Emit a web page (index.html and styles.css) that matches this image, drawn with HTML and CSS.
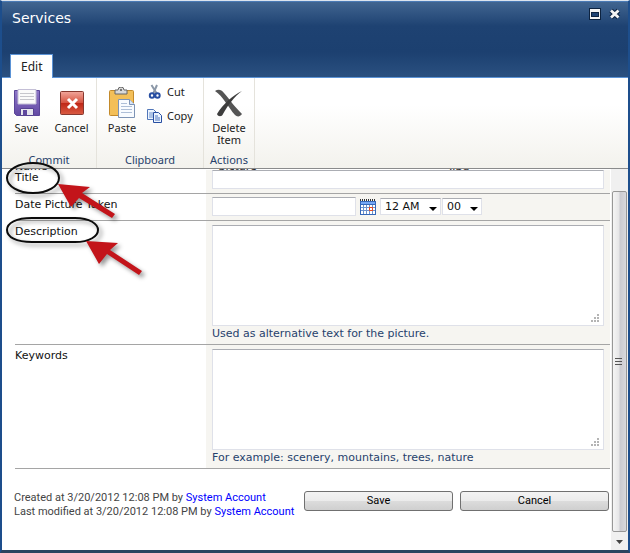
FILE: index.html
```html
<!DOCTYPE html>
<html lang="en">
<head>
<meta charset="utf-8">
<title>Services</title>
<link rel="stylesheet" href="styles.css">
</head>
<body>
<main class="dialog">
  <header class="titlebar">
    <div class="heading">
      <h1>Services</h1>
      <div class="window-buttons">
        <button type="button" aria-label="Maximize"><svg width="12" height="12" viewBox="0 0 12 12"><rect x=".5" y=".5" width="11" height="11" fill="#f4f4f4" stroke="#0d2340"/><rect x="2.5" y="4.5" width="7" height="4" fill="#1e4373" stroke="#0d2340"/></svg></button>
        <button type="button" aria-label="Close"><svg width="12" height="12" viewBox="0 0 12 12"><path d="M2 2.500l7.500 7m0-7l-7.500 7" stroke="#0d2340" stroke-width="5"/><path d="M2 2.500l7.500 7m0-7l-7.500 7" stroke="#f4f4f4" stroke-width="2.800"/></svg></button>
      </div>
    </div>
    <button type="button" class="tab">Edit</button>
  </header>

  <section class="ribbon" aria-label="Edit">
    <div class="group commit">
      <div class="tools">
        <button type="button" class="tool"><svg width="32" height="32" viewBox="0 0 32 32"><defs><linearGradient id="disk" x2="0" y2="1"><stop stop-color="#8f78c8"/><stop offset="1" stop-color="#6249a3"/></linearGradient></defs><path d="M3.500 3.500h25v25h-23l-2-2z" fill="url(#disk)" stroke="#5a4598"/><path d="M7 2.500h18V17H7z" fill="#fafafa" stroke="#c4bfd6"/><path d="M9 6.500h14M9 9.500h14M9 12.500h14" stroke="#c6c6cc"/><path d="M9.500 21.500h13v7h-13z" fill="#e5e5ed" stroke="#554291"/><path d="M12 23h4v5h-4z" fill="#5f489e"/></svg><span>Save</span></button>
        <button type="button" class="tool"><svg width="32" height="32" viewBox="0 0 32 32"><defs><linearGradient id="red" x2="0" y2="1"><stop stop-color="#f1a79c"/><stop offset=".5" stop-color="#d6523f"/><stop offset=".52" stop-color="#c02818"/><stop offset="1" stop-color="#d95b42"/></linearGradient></defs><rect x="4.500" y="4.500" width="23" height="23" rx="1" fill="url(#red)" stroke="#87382f"/><path d="M12 12l9 9m0-9l-9 9" stroke="#fff" stroke-width="3"/></svg><span>Cancel</span></button>
      </div>
      <h2>Commit</h2>
    </div>
    <div class="group clipboard">
      <div class="tools">
        <button type="button" class="tool"><svg width="32" height="32" viewBox="0 0 32 32"><rect x="3.500" y="3.500" width="24" height="25" rx="1" fill="#f3bf58" stroke="#c38a2b"/><path d="M9 3h3a3 3 0 0 1 6 0h3v4H9z" fill="#d9d9d9" stroke="#666"/><circle cx="15" cy="3" r="1" fill="#555"/><path d="M12.500 12.500h11l5 5v13h-16z" fill="#f8fbff" stroke="#7d93b5"/><path d="M23.500 12.500v5h5" fill="#d8e4f4" stroke="#7d93b5"/><path d="M15 16.500h6M15 19.500h11M15 22.500h11M15 25.500h11" stroke="#aebfd8"/></svg><span>Paste</span></button>
        <div class="small-tools">
          <button type="button"><svg width="16" height="16" viewBox="0 0 16 16"><path d="M4.500 1L10 10M10 1L6 10" stroke="#8c98a8" stroke-width="2"/><circle cx="5" cy="11.500" r="2.200" fill="none" stroke="#284fa2" stroke-width="2"/><circle cx="10.500" cy="11.500" r="2.200" fill="none" stroke="#284fa2" stroke-width="2"/></svg>Cut</button>
          <button type="button"><svg width="16" height="16" viewBox="0 0 16 16"><path d="M.5 1.500h6l3 3v7h-9z" fill="#edf5ff" stroke="#5176b9"/><path d="M2 5h4M2 7h5M2 9h5" stroke="#6c91cd"/><path d="M6.500 4.500h5l3 3v7h-8z" fill="#edf5ff" stroke="#284fa2"/><path d="M8 8h3M8 10h5M8 12h5" stroke="#4e76c0"/></svg>Copy</button>
        </div>
      </div>
      <h2>Clipboard</h2>
    </div>
    <div class="group actions">
      <div class="tools">
        <button type="button" class="tool"><svg width="32" height="32" viewBox="0 0 32 32"><path d="M2 4c3-2 6-2 9 2 6 7 10 13 18 21-2 3-5 3-7 1C15 20 10 9 2 4z" fill="#555"/><path d="M29 4C20 8 10 17 4 27c1 3 5 3 6 0 5-9 11-17 19-23z" fill="#3d3d3d"/></svg><span>Delete<br>Item</span></button>
      </div>
      <h2>Actions</h2>
    </div>
  </section>

  <div class="viewport">
    <form class="form">
      <div class="scrolled">
        <span>Name</span><span class="scrolled-value">picture</span><span>.jpg</span>
      </div>
      <div class="row first">
        <label for="title">Title</label>
        <div class="field"><input id="title" type="text" class="wide"></div>
      </div>
      <div class="row">
        <label for="date">Date Picture Taken</label>
        <div class="field date">
          <input id="date" type="text">
          <button type="button" class="calendar" aria-label="Pick a date"><svg width="16" height="16" viewBox="0 0 16 16"><path d="M0 2h16v14H0z" fill="#3567b8"/><path d="M1 3h14v2H1z" fill="#75a7f4"/><path d="M1 6h14v9H1z" fill="#fff"/><path d="M1 8.500h14M1 11.500h14M3.500 6v9M6.500 6v9M9.500 6v9M12.500 6v9" stroke="#6d93cd"/><path d="M0 1h16" stroke="#333" stroke-dasharray="1 1" stroke-width="2"/><rect x="9.500" y="8.500" width="3" height="3" fill="#fff" stroke="#e34c26"/></svg></button>
          <span class="select"><select class="hour" aria-label="Hour"><option>12 AM</option></select></span>
          <span class="select"><select class="minute" aria-label="Minute"><option>00</option></select></span>
        </div>
      </div>
      <div class="row">
        <label for="description">Description</label>
        <div class="field">
          <div class="area"><textarea id="description"></textarea><svg class="grip" width="8" height="8" viewBox="0 0 8 8"><path d="M6 0h2v2H6zM3 3h2v2H3zM6 3h2v2H6zM0 6h2v2H0zM3 6h2v2H3zM6 6h2v2H6z" fill="#b4b4b4"/></svg></div>
          <p>Used as alternative text for the picture.</p>
        </div>
      </div>
      <div class="row">
        <label for="keywords">Keywords</label>
        <div class="field">
          <div class="area"><textarea id="keywords"></textarea><svg class="grip" width="8" height="8" viewBox="0 0 8 8"><path d="M6 0h2v2H6zM3 3h2v2H3zM6 3h2v2H6zM0 6h2v2H0zM3 6h2v2H3zM6 6h2v2H6z" fill="#b4b4b4"/></svg></div>
          <p>For example: scenery, mountains, trees, nature</p>
        </div>
      </div>
      <footer>
        <div class="history">
          <div>Created at 3/20/2012 12:08 PM by <a href="#">System Account</a></div>
          <div>Last modified at 3/20/2012 12:08 PM by <a href="#">System Account</a></div>
        </div>
        <button type="button">Save</button>
        <button type="button">Cancel</button>
      </footer>
    </form>
    <div class="scrollbar" aria-hidden="true">
      <div class="thumb"><svg width="8" height="9" viewBox="0 0 8 9"><path d="M0 1.500h7M0 4.500h7M0 7.500h7" stroke="#555"/></svg></div>
      <svg width="7" height="4" viewBox="0 0 7 4"><path d="M0 0h7L3.500 4z" fill="#444"/></svg>
    </div>
  </div>

  <svg class="marks" width="150" height="290" viewBox="0 0 150 290" aria-hidden="true">
    <g fill="none" stroke="#0b0b0b" stroke-width="2">
      <ellipse cx="33" cy="178" rx="26" ry="15"/>
      <path d="M32 218H75C90 218 98 224 98 230S90 242 75 242H32C16 242 7 237 7 230S16 218 32 218z"/>
    </g>
    <g fill="#c3141a">
      <path d="M58 184L90 187L82 193L115 214L112 218L79 198L71 207z"/>
      <path d="M86 241L118 243L110 250L142 271L139 275L107 254L99 264z"/>
    </g>
  </svg>
</main>
</body>
</html>
```
FILE: styles.css
```css
* { box-sizing: border-box; }
body {
  margin: 0;
  font: 11px/16px "DejaVu Sans", Verdana, sans-serif;
  color: #222;
}
h1, h2, p { margin: 0; font-weight: normal; }
button { margin: 0; padding: 0; border: 0; background: none; font: inherit; color: inherit; }
svg { display: block; flex: none; }

.dialog {
  position: relative;
  display: flex;
  flex-direction: column;
  min-height: 100vh;
  border: 2px solid #1d4e8c;
  border-top: 1px solid #dce4ee;
  border-bottom: 3px solid #2c4460;
  background: #fff;
}
.titlebar {
  display: flex;
  flex-direction: column;
  justify-content: space-between;
  align-items: flex-start;
  height: 77px;
  border-top: 1px solid #4a7ab5;
  border-bottom: 1px solid #5b93d6;
  background: linear-gradient(#416590, #1e4272 24px, #1c4070 50px, #2a5080);
}
.heading {
  display: flex;
  justify-content: space-between;
  align-self: stretch;
  padding: 6px 7px 0 10px;
}
.heading h1 { padding-top: 1px; font-size: 14px; line-height: 18px; color: #fff; }
.window-buttons { display: flex; gap: 8px; align-items: flex-start; }
.tab {
  height: 24px;
  margin: 0 0 -1px 8px;
  padding: 0 10px;
  border: 1px solid #5b93d6;
  border-bottom: 0;
  background: #fff;
  font: 12px/24px "Noto Sans", "Segoe UI", sans-serif;
}

.ribbon {
  display: flex;
  height: 91px;
  border-bottom: 1px solid #8a8b8c;
  background: linear-gradient(#fff 30%, #f3f2ed);
  font: 11px/12px "Noto Sans", "Segoe UI", sans-serif;
}
.group {
  display: flex;
  flex-direction: column;
  justify-content: space-between;
  padding: 9px 0 0;
  border-right: 1px solid #e5e3dc;
}
.commit { width: 95px; }
.clipboard { width: 107px; }
.actions { width: 51px; }
.group h2 { font-size: 11px; line-height: 16px; text-align: center; color: #27416b; }
.tools { display: flex; }
.commit .tools { padding-left: 2px; }
.tool { display: flex; flex-direction: column; align-items: center; width: 45px; }
.tool span { padding-top: 3px; }
.clipboard .tool { width: 50px; }
.actions .tool { width: 50px; }
.small-tools { display: flex; flex-direction: column; gap: 8px; margin-top: -3px; }
.small-tools button { display: flex; align-items: center; gap: 4px; height: 16px; }

.viewport { display: flex; flex: 1; }
.form { flex: 1; min-width: 0; padding: 0 0 30px 13px; }
.scrolled {
  display: flex;
  align-items: flex-end;
  height: 1px;
  overflow: hidden;
  line-height: 6px;
}
.scrolled-value { margin: 0 192px 0 171px; }
.row {
  display: grid;
  grid-template-columns: 191px 1fr;
  border-bottom: 1px solid #a5a5a5;
}
.row label { padding-top: 3px; color: #111; }
.field { padding: 4px 6px; background: #f6f5f1; }
.first .field { padding-top: 0; }
.first label { padding-top: 0; }
input, textarea, select {
  display: block;
  margin: 0;
  border: 1px solid #dfe1e9;
  border-top-color: #abadb3;
  border-radius: 0;
  background: #fff;
  font: inherit;
  color: #111;
}
input { width: 144px; height: 19px; }
input.wide, textarea { width: 100%; }
textarea { height: 101px; resize: none; }
.area { position: relative; }
.grip { position: absolute; right: 5px; bottom: 4px; }
.field p { margin-bottom: -2px; color: #26426d; }
.field.date { display: flex; align-items: center; padding-top: 3px; }
.calendar { margin: 0 4px; }
.select { position: relative; margin-right: 1px; }
.select::after {
  content: "";
  position: absolute;
  right: 4px;
  top: 9px;
  border: 4px solid transparent;
  border-top-color: #000;
  border-bottom: 0;
  pointer-events: none;
}
select { height: 17px; padding: 0 0 0 4px; line-height: 15px; appearance: none; }
.hour { width: 61px; }
.minute { width: 40px; }

footer {
  display: flex;
  align-items: center;
  gap: 7px;
  padding: 20px 1px 0 0;
  font-family: Roboto, Tahoma, sans-serif;
}
.history { flex: 1; min-width: 0; margin-left: -1px; padding-top: 2px; line-height: 14px; white-space: nowrap; color: #444; }
a { color: #00f; text-decoration: none; }
footer button {
  flex: none;
  width: 149px;
  height: 20px;
  margin-bottom: 6px;
  border: 1px solid #707070;
  border-radius: 3px;
  background: linear-gradient(#f3f3f3, #ebebeb 50%, #dcdcdc 51%, #cfcfcf);
  color: #000;
}

.scrollbar {
  display: flex;
  flex: none;
  flex-direction: column;
  align-items: center;
  width: 17px;
  margin-left: 1px;
  padding: 22px 1px 6px 0;
  background: #f0f0f0;
}
.thumb {
  display: flex;
  flex: 1;
  align-items: center;
  justify-content: center;
  width: 15px;
  margin-bottom: 8px;
  border: 1px solid #979797;
  border-radius: 2px;
  background: linear-gradient(90deg, #f5f5f5, #e6e6e8 45%, #cbcbd0 55%, #d8d8dc);
}

.marks {
  position: absolute;
  top: -1px;
  left: -2px;
  filter: drop-shadow(3px 3px 2px rgba(0, 0, 0, .4));
  pointer-events: none;
}
```
